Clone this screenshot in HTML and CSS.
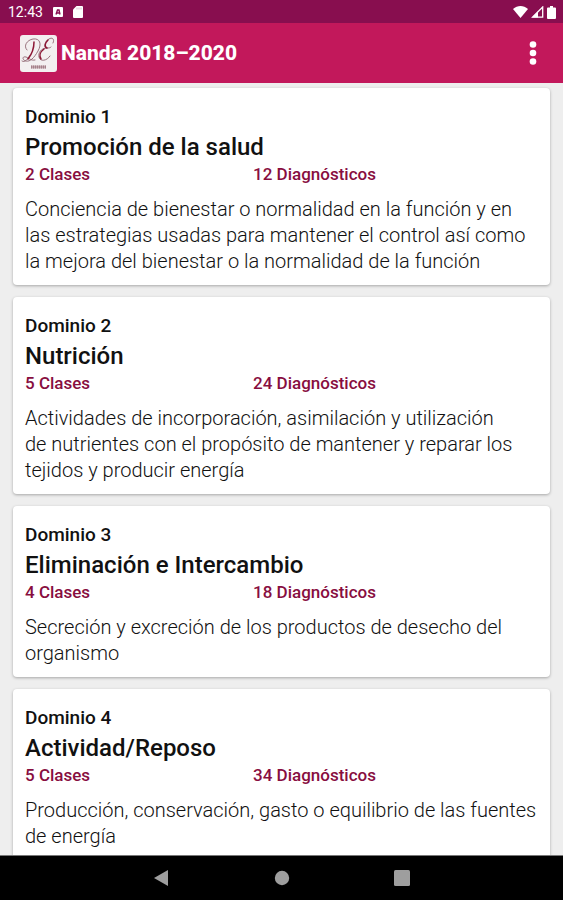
FILE: index.html
```html
<!DOCTYPE html>
<html lang="es">
<head>
    <meta charset="UTF-8">
    <meta name="viewport" content="width=device-width, initial-scale=1.0">
    <title>Nanda 2018–2020</title>
    <link rel="stylesheet" href="styles.css">
</head>
<body>
    <div class="status-bar">
        <span class="clock">12:43</span>
        <svg width="12" height="12" viewBox="0 0 12 12">
            <rect x="1" y="1" width="10" height="10" rx="1" fill="#fff"/>
            <path d="M4 8.500L5.500 4h1.500L8 8.500M4.500 7h3" fill="none" stroke="#880e4f" stroke-width="1.400"/>
        </svg>
        <svg width="12" height="12" viewBox="0 0 12 12">
            <path d="M4.500 0H10a1 1 0 0 1 1 1v10a1 1 0 0 1-1 1H2a1 1 0 0 1-1-1V3.500z" fill="#fff"/>
            <path d="M5 1.500v2M7 1.500v2M9 1.500v2" stroke="#c9a0b6" stroke-width="0.700"/>
        </svg>
        <div class="signals">
            <svg width="15" height="12" viewBox="0 0 15 12">
                <path d="M0 3C4.500-1 10.500-1 15 3L7.500 12z" fill="#fff"/>
            </svg>
            <svg width="13" height="12" viewBox="0 0 13 12">
                <path d="M1.500 11.200L11.700 1v10.200z" fill="none" stroke="#fff" stroke-width="1.300"/>
                <path d="M1 11.500L7 5.500v6z" fill="#fff"/>
            </svg>
            <svg width="9" height="13" viewBox="0 0 9 13">
                <path d="M3 0h3v1.500h2a1 1 0 0 1 1 1V12a1 1 0 0 1-1 1H1a1 1 0 0 1-1-1V2.500a1 1 0 0 1 1-1h2z" fill="#fff"/>
            </svg>
        </div>
    </div>

    <header class="app-bar">
        <svg class="logo" width="37" height="37" viewBox="0 0 37 37">
            <rect width="37" height="37" rx="3" fill="#f3eff0"/>
            <g fill="none" stroke="#8f6470" stroke-width="0.900" stroke-linecap="round">
                <path d="M7 15C3 11 7 5 13 4c7-1 9 5 5 12-4 7-8 11-12 10-4-1-4-5 0-4 3 1 5 4 9 3"/>
                <path d="M33 8c2-4-1-6-4-4-4 2-6 8-2 9-6 0-9 5-8 9 1 5 8 4 11-1M27 13c2 0 3 0 4-1"/>
                <path d="M2 26c3 2 6-2 8-6"/>
            </g>
            <path d="M14 7c0 6-2 12-6 17M28 5c-3 3-4 7-1 8M24 14c-4 3-5 7-3 10" fill="none" stroke="#8d1735" stroke-width="1.500" stroke-linecap="round"/>
            <path d="M11 32h15" stroke="#c3a9af" stroke-width="3"/>
            <path d="M11 32h15" stroke="#a5808a" stroke-width="3" stroke-dasharray="1 1"/>
        </svg>
        <h1>Nanda 2018–2020</h1>
        <button class="menu-btn" aria-label="Más opciones">
            <svg width="8" height="26" viewBox="0 0 8 26">
                <circle cx="4" cy="4.500" r="3.300" fill="#fff"/>
                <circle cx="4" cy="13" r="3.300" fill="#fff"/>
                <circle cx="4" cy="21.500" r="3.300" fill="#fff"/>
            </svg>
        </button>
    </header>

    <main class="list">
        <article class="card">
            <div class="domain">Dominio 1</div>
            <h2>Promoción de la salud</h2>
            <div class="counts">
                <span>2 Clases</span>
                <span>12 Diagnósticos</span>
            </div>
            <p>Conciencia de bienestar o normalidad en la función y en las estrategias usadas para mantener el control así como la mejora del bienestar o la normalidad de la función</p>
        </article>

        <article class="card">
            <div class="domain">Dominio 2</div>
            <h2>Nutrición</h2>
            <div class="counts">
                <span>5 Clases</span>
                <span>24 Diagnósticos</span>
            </div>
            <p>Actividades de incorporación, asimilación y utilización de&nbsp;nutrientes con el propósito de mantener y reparar los tejidos y producir energía</p>
        </article>

        <article class="card">
            <div class="domain">Dominio 3</div>
            <h2>Eliminación e Intercambio</h2>
            <div class="counts">
                <span>4 Clases</span>
                <span>18 Diagnósticos</span>
            </div>
            <p>Secreción y excreción de los productos de desecho del organismo</p>
        </article>

        <article class="card">
            <div class="domain">Dominio 4</div>
            <h2>Actividad/Reposo</h2>
            <div class="counts">
                <span>5 Clases</span>
                <span>34 Diagnósticos</span>
            </div>
            <p>Producción, conservación, gasto o equilibrio de las fuentes de energía</p>
        </article>
    </main>

    <nav class="nav-bar">
        <button aria-label="Atrás">
            <svg width="16" height="16" viewBox="0 0 16 16"><path d="M14 0v16L0 8z" fill="#9e9e9e"/></svg>
        </button>
        <button aria-label="Inicio">
            <svg width="16" height="16" viewBox="0 0 16 16"><circle cx="8" cy="8" r="7.200" fill="#9e9e9e"/></svg>
        </button>
        <button aria-label="Recientes">
            <svg width="16" height="16" viewBox="0 0 16 16"><rect width="16" height="16" rx="1.500" fill="#9e9e9e"/></svg>
        </button>
    </nav>
</body>
</html>
```

FILE: styles.css
```css
* {
    box-sizing: border-box;
}
body {
    margin: 0;
    height: 100vh;
    display: flex;
    flex-direction: column;
    font-family: Roboto, "Liberation Sans", sans-serif;
    background-color: #eeeeee;
    color: #111;
}
h1, h2, p {
    margin: 0;
}
button {
    padding: 0;
    border: none;
    background: none;
    cursor: pointer;
}
svg {
    display: block;
}
.status-bar {
    flex: none;
    display: flex;
    align-items: center;
    gap: 8px;
    height: 23px;
    padding: 1px 7px 0 8px;
    background-color: #880e4f;
    color: #fff;
}
.clock {
    font-size: 14px;
    margin-right: 1px;
}
.signals {
    display: flex;
    align-items: center;
    gap: 3px;
    margin-left: auto;
}
.app-bar {
    flex: none;
    display: flex;
    align-items: center;
    gap: 4px;
    height: 60px;
    padding: 0 20px;
    background-color: #c2185b;
    color: #fff;
}
.app-bar h1 {
    font-size: 21px;
    font-weight: 800;
}
.menu-btn {
    display: flex;
    justify-content: center;
    width: 20px;
    margin-left: auto;
}
.list {
    flex: 1;
    min-height: 0;
    overflow-y: auto;
    scrollbar-width: none;
    padding: 5px 13px 12px;
}
.card {
    margin-bottom: 12px;
    padding: 17px 12px 11px;
    background-color: #fff;
    border-radius: 4px;
    box-shadow: 0 1px 3px rgba(0,0,0,0.3);
}
.domain {
    font-size: 19px;
    font-weight: 500;
    line-height: 24px;
}
.card h2 {
    margin-top: 3px;
    font-size: 24px;
    font-weight: 500;
    line-height: 30px;
}
.counts {
    display: grid;
    grid-template-columns: 4fr 5fr;
    margin: 2px 0 12px;
    font-size: 17px;
    font-weight: 500;
    line-height: 20px;
    color: #880e3f;
}
.card p {
    font-size: 20px;
    font-weight: 300;
    line-height: 26px;
}
.nav-bar {
    flex: none;
    display: flex;
    justify-content: center;
    align-items: center;
    gap: 104px;
    height: 45px;
    border-top: 1px solid #777;
    background-color: #000;
}
```
